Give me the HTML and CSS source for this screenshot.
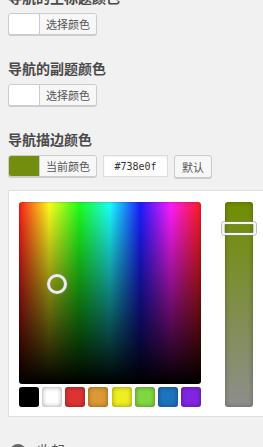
FILE: index.html
```html
<!DOCTYPE html>
<html lang="zh">
<head>
<meta charset="utf-8">
<link rel="stylesheet" href="styles.css">
</head>
<body>
<div class="page">
  <section class="field">
    <h3 class="field-title">导航的主标题颜色</h3>
    <div class="picker-row">
      <button class="color-result"><span class="swatch swatch-empty"></span><span class="result-label">选择颜色</span></button>
    </div>
  </section>
  <section class="field">
    <h3 class="field-title">导航的副题颜色</h3>
    <div class="picker-row">
      <button class="color-result"><span class="swatch swatch-empty"></span><span class="result-label">选择颜色</span></button>
    </div>
  </section>
  <section class="field field-open">
    <h3 class="field-title">导航描边颜色</h3>
    <div class="picker-row">
      <button class="color-result"><span class="swatch swatch-olive"></span><span class="result-label">当前颜色</span></button>
      <input class="hex-input" type="text" value="#738e0f">
      <button class="default-btn">默认</button>
    </div>
    <div class="iris">
      <div class="iris-left">
        <div class="iris-square">
          <span class="square-handle"></span>
        </div>
        <div class="palette">
          <span class="pal pal-black"></span>
          <span class="pal pal-white"></span>
          <span class="pal pal-red"></span>
          <span class="pal pal-orange"></span>
          <span class="pal pal-yellow"></span>
          <span class="pal pal-green"></span>
          <span class="pal pal-blue"></span>
          <span class="pal pal-purple"></span>
        </div>
      </div>
      <div class="iris-strip">
        <span class="strip-handle"></span>
      </div>
    </div>
  </section>
  <div class="collapse">
    <svg class="collapse-icon" width="16" height="16" viewBox="0 0 16 16"><circle cx="8" cy="8" r="8" fill="#666"/><polygon points="4,8 10,3.5 10,12.5" fill="#f1f1f1"/></svg>
    <span class="collapse-label">收起</span>
  </div>
</div>
</body>
</html>
```
FILE: styles.css
```css
html, body {
  margin: 0;
  padding: 0;
  overflow: hidden;
  background: #f1f1f1;
}
body {
  font-family: "Noto Sans CJK SC", "Noto Sans", sans-serif;
  color: #555;
}
.page {
  padding: 0 8px;
  margin-top: -13px;
}
.field {
  margin-bottom: 23px;
}
.field-open {
  margin-bottom: 0;
}
.field-title {
  margin: 0 0 6px 0;
  font-size: 14px;
  line-height: 20px;
  font-weight: bold;
  color: #4a4a4a;
}
.picker-row {
  display: flex;
  align-items: flex-start;
  gap: 6px;
  height: 22px;
}
.color-result {
  display: flex;
  height: 22px;
  padding: 0;
  margin: 0;
  border: 1px solid #ccc;
  border-radius: 3px;
  box-shadow: 0 1px 0 #ccc;
  background: #f7f7f7;
  overflow: hidden;
  box-sizing: border-box;
  font-family: inherit;
  cursor: pointer;
}
.swatch {
  width: 30px;
  height: 100%;
  display: block;
}
.swatch-empty { background: #fff; }
.swatch-olive { background: #738e0f; }
.result-label {
  display: block;
  border-left: 1px solid #ccc;
  padding: 0 6px;
  font-size: 11px;
  line-height: 20px;
  color: #555;
  background: #f7f7f7;
}
.hex-input {
  width: 65px;
  height: 22px;
  box-sizing: border-box;
  margin: 0;
  border: 1px solid #ddd;
  box-shadow: inset 0 1px 2px rgba(0,0,0,.07);
  background: #fff;
  font-family: "DejaVu Sans Mono", monospace;
  font-size: 10px;
  color: #333;
  text-align: center;
  padding: 0;
  outline: none;
}
.default-btn {
  height: 23px;
  box-sizing: border-box;
  margin: 0;
  padding: 0 7px;
  border: 1px solid #ccc;
  border-radius: 3px;
  box-shadow: 0 1px 0 #ccc;
  background: #f7f7f7;
  font-family: inherit;
  font-size: 11px;
  color: #555;
  line-height: 20px;
}
.iris {
  margin-top: 13px;
  width: 270px;
  box-sizing: border-box;
  background: #fff;
  border: 1px solid #dfdfdf;
  padding: 11px 10px 9px 10px;
  display: flex;
  gap: 24px;
  align-items: flex-start;
}
.iris-left {
  display: flex;
  flex-direction: column;
  gap: 3px;
  width: 182px;
}
.iris-square {
  position: relative;
  width: 182px;
  height: 182px;
  border-radius: 3px;
  background:
    linear-gradient(to bottom, rgba(0,0,0,0), #000),
    linear-gradient(to right, #ff1c1c, #ffff1c 16.67%, #1cff1c 33.33%, #1cffff 50%, #1c1cff 66.67%, #ff1cff 83.33%, #ff1c1c);
  box-shadow: inset 0 0 3px rgba(0,0,0,.3);
}
.square-handle {
  position: absolute;
  left: 28px;
  top: 72px;
  width: 14px;
  height: 14px;
  border-radius: 50%;
  border: 3px solid #ececec;
  box-shadow: 0 0 0 1px rgba(128,128,128,.45), inset 0 0 0 1px rgba(128,128,128,.3);
}
.palette {
  display: flex;
  justify-content: space-between;
}
.pal {
  width: 20px;
  height: 20px;
  border-radius: 3px;
  box-shadow: inset 0 0 5px rgba(0,0,0,.4);
}
.pal-black { background: #000; }
.pal-white { background: #fff; }
.pal-red { background: #dd3333; }
.pal-orange { background: #dd9933; }
.pal-yellow { background: #eeee22; }
.pal-green { background: #81d742; }
.pal-blue { background: #1e73be; }
.pal-purple { background: #8224e3; }
.iris-strip {
  position: relative;
  width: 28px;
  height: 205px;
  border-radius: 3px;
  background: linear-gradient(to bottom, #708e00, #8e8e8e);
  box-shadow: inset 0 0 5px rgba(0,0,0,.3);
}
.strip-handle {
  position: absolute;
  left: -3px;
  right: -3px;
  top: 20px;
  height: 9px;
  border: 2px solid #f4f4f4;
  border-radius: 3px;
  box-shadow: 0 0 0 1px rgba(128,128,128,.5), inset 0 0 0 1px rgba(128,128,128,.4);
}
.collapse {
  margin-top: 20px;
  display: flex;
  align-items: center;
  gap: 11px;
  padding-left: 2px;
  height: 20px;
}
.collapse-icon {
  display: block;
  margin-top: 9px;
}
.collapse-label {
  font-size: 14px;
  line-height: 20px;
  color: #555;
  margin-top: 6px;
}
```
